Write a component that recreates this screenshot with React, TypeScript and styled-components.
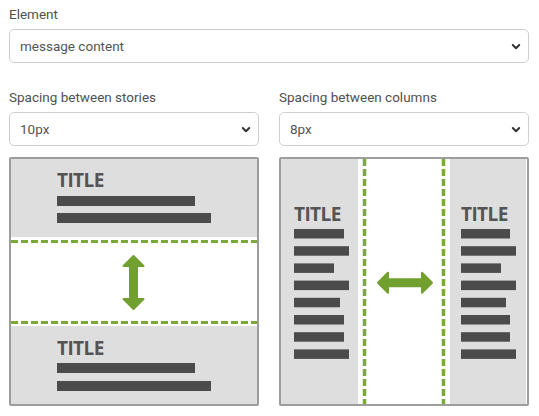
import React from "react";
import styled, { createGlobalStyle } from "styled-components";

const Global = createGlobalStyle`
  html, body { margin: 0; padding: 0; background: #fff; }
  body { font-family: Roboto, "Liberation Sans", Arial, sans-serif; }
`;

const Page = styled.div`
  width: 539px;
  box-sizing: border-box;
  padding: 4px 10px 0 9px;
  display: flex;
  flex-direction: column;
  gap: 24px;
`;

const Field = styled.div`
  display: flex;
  flex-direction: column;
  gap: 5px;
`;

const Label = styled.label`
  font-size: 13.5px;
  line-height: 20px;
  color: #505050;
`;

const SelectWrap = styled.div`
  position: relative;
  height: 34px;
`;

const Select = styled.select`
  appearance: none;
  -webkit-appearance: none;
  width: 100%;
  height: 34px;
  box-sizing: border-box;
  border: 1px solid #cfcfcf;
  border-radius: 5px;
  background: #fff;
  padding: 0 30px 0 10px;
  font-family: Roboto, "Liberation Sans", Arial, sans-serif;
  font-size: 13.5px;
  color: #555;
  outline: none;
`;

const Chevron = styled.svg`
  position: absolute;
  right: 8px;
  top: 14px;
  width: 10px;
  height: 8px;
  pointer-events: none;
`;

const Columns = styled.div`
  display: grid;
  grid-template-columns: 1fr 1fr;
  column-gap: 20px;
`;

const Column = styled.div`
  display: flex;
  flex-direction: column;
  gap: 11px;
`;

const Preview = styled.div`
  height: 249px;
  box-sizing: border-box;
  border: 2px solid #9d9d9d;
  border-radius: 2px;
  background: #fff;
  overflow: hidden;
  svg { display: block; }
`;

const GREEN = "#72a02f";
const DASH = "#7aa937";
const GRAY = "#dedede";
const BAR = "#4b4b4b";
const TEXT = "#545454";

const titleStyle: React.CSSProperties = {
  fontFamily: '"Open Sans", "Liberation Sans", sans-serif',
  fontWeight: 700,
  fontSize: 19,
  letterSpacing: -0.6,
};

function ChevronIcon() {
  return (
    <Chevron viewBox="0 0 10 8">
      <path d="M1.8 2 L5 5.2 L8.2 2" fill="none" stroke="#333" strokeWidth="2" strokeLinecap="round" strokeLinejoin="round" />
    </Chevron>
  );
}

function Dropdown({ value, options }: { value: string; options: string[] }) {
  return (
    <SelectWrap>
      <Select defaultValue={value}>
        {options.map((o) => (
          <option key={o} value={o}>
            {o}
          </option>
        ))}
      </Select>
      <ChevronIcon />
    </SelectWrap>
  );
}

function vArrow(cx: number, top: number, bottom: number) {
  const hw = 10, hl = 10, sw = 3.5;
  return `M${cx} ${top} L${cx + hw} ${top + hl} L${cx + sw} ${top + hl} L${cx + sw} ${bottom - hl} L${cx + hw} ${bottom - hl} L${cx} ${bottom} L${cx - hw} ${bottom - hl} L${cx - sw} ${bottom - hl} L${cx - sw} ${top + hl} L${cx - hw} ${top + hl} Z`;
}

function hArrow(cy: number, left: number, right: number) {
  const hw = 10, hl = 10, sw = 3.5;
  return `M${left} ${cy} L${left + hl} ${cy - hw} L${left + hl} ${cy - sw} L${right - hl} ${cy - sw} L${right - hl} ${cy - hw} L${right} ${cy} L${right - hl} ${cy + hw} L${right - hl} ${cy + sw} L${left + hl} ${cy + sw} L${left + hl} ${cy + hw} Z`;
}

function StoriesDiagram() {
  return (
    <svg width="246" height="245" viewBox="0 0 246 245">
      <rect x="0" y="0" width="246" height="78" fill={GRAY} />
      <rect x="0" y="167" width="246" height="78" fill={GRAY} />
      <line x1="0" y1="82.5" x2="246" y2="82.5" stroke={DASH} strokeWidth="3" strokeDasharray="7 3" />
      <line x1="0" y1="163.5" x2="246" y2="163.5" stroke={DASH} strokeWidth="3" strokeDasharray="7 3" />
      <text x="46" y="28" fill={TEXT} style={titleStyle}>TITLE</text>
      <rect x="46" y="37" width="138" height="10" fill={BAR} />
      <rect x="46" y="54" width="154" height="10" fill={BAR} />
      <path d={vArrow(122.5, 97, 150)} fill={GREEN} stroke={GREEN} strokeWidth="2" strokeLinejoin="round" />
      <text x="46" y="196" fill={TEXT} style={titleStyle}>TITLE</text>
      <rect x="46" y="204" width="138" height="10" fill={BAR} />
      <rect x="46" y="222" width="154" height="10" fill={BAR} />
    </svg>
  );
}

const leftBars = [50, 55, 40, 55, 46, 50, 50, 55];
const rightBars = [49, 55, 40, 55, 45, 49, 49, 55];

function ColumnsDiagram() {
  return (
    <svg width="245" height="245" viewBox="0 0 245 245">
      <rect x="0" y="0" width="77" height="245" fill={GRAY} />
      <rect x="169" y="0" width="77" height="245" fill={GRAY} />
      <line x1="83.5" y1="0" x2="83.5" y2="245" stroke={DASH} strokeWidth="3.5" strokeDasharray="7 3" />
      <line x1="162.5" y1="0" x2="162.5" y2="245" stroke={DASH} strokeWidth="3.5" strokeDasharray="7 3" />
      <text x="13" y="62" fill={TEXT} style={titleStyle}>TITLE</text>
      {leftBars.map((w, i) => (
        <rect key={i} x="13" y={70 + i * 17.2} width={w} height="9.5" fill={BAR} />
      ))}
      <text x="180" y="62" fill={TEXT} style={titleStyle}>TITLE</text>
      {rightBars.map((w, i) => (
        <rect key={i} x="180" y={70 + i * 17.2} width={w} height="9.5" fill={BAR} />
      ))}
      <path d={hArrow(123.7, 97, 151)} fill={GREEN} stroke={GREEN} strokeWidth="2" strokeLinejoin="round" />
    </svg>
  );
}

export default function App() {
  return (
    <>
      <Global />
      <Page>
        <Field>
          <Label>Element</Label>
          <Dropdown value="message content" options={["message content", "title", "image"]} />
        </Field>
        <Columns>
          <Column>
            <Field>
              <Label>Spacing between stories</Label>
              <Dropdown value="10px" options={["0px", "5px", "10px", "15px", "20px"]} />
            </Field>
            <Preview>
              <StoriesDiagram />
            </Preview>
          </Column>
          <Column>
            <Field>
              <Label>Spacing between columns</Label>
              <Dropdown value="8px" options={["0px", "4px", "8px", "12px", "16px"]} />
            </Field>
            <Preview>
              <ColumnsDiagram />
            </Preview>
          </Column>
        </Columns>
      </Page>
    </>
  );
}
